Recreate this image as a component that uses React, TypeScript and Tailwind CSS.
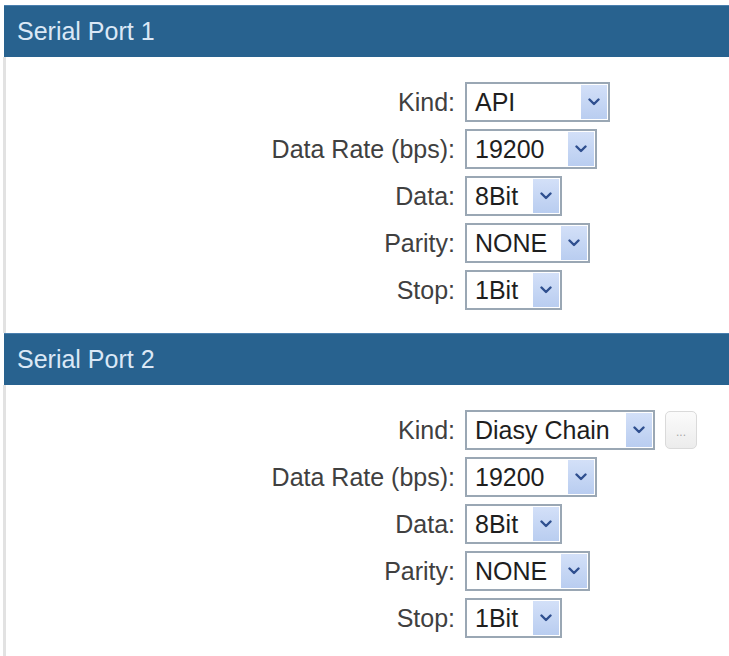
import React from "react";

const Chevron = () => (
  <svg width="12" height="8" viewBox="0 0 12 8" fill="none">
    <path d="M1.5 1.5 L6 6 L10.5 1.5" stroke="#2f4f8f" strokeWidth="2.4" strokeLinecap="round" strokeLinejoin="round" />
  </svg>
);

function Select({ value, width }: { value: string; width: string }) {
  return (
    <div className={`${width} h-[40px] flex items-stretch border-2 border-[#9aa7b4] bg-white`}>
      <div className="flex-1 flex items-center pl-[8px] text-[25px] leading-none text-[#1e1e1e] whitespace-nowrap overflow-hidden">
        {value}
      </div>
      <div className="w-[26px] my-[1px] mr-[1px] flex items-center justify-center bg-gradient-to-b from-[#d3e0f8] to-[#b9cdf0]">
        <Chevron />
      </div>
    </div>
  );
}

function Row({ label, value, width, extra }: { label: string; value: string; width: string; extra?: boolean }) {
  return (
    <div className="flex items-center h-[40px]">
      <div className="w-[449px] text-right text-[25px] leading-none text-[#404040] whitespace-nowrap">{label}</div>
      <div className="ml-[10px] flex items-center">
        <Select value={value} width={width} />
        {extra && (
          <div className="ml-[10px] w-[32px] h-[38px] rounded-[5px] border border-[#dadada] bg-gradient-to-b from-[#fbfbfb] to-[#ececec] flex items-end justify-center pb-[10px] text-[12px] leading-none text-[#a8a8a8]">
            ...
          </div>
        )}
      </div>
    </div>
  );
}

function Header({ title }: { title: string }) {
  return (
    <div className="h-[52px] ml-[1px] bg-[#28628f] border-t border-[#4a7fae] flex items-center pl-[13px] text-[25px] leading-none text-[#dbe8f6]">
      {title}
    </div>
  );
}

export default function App() {
  return (
    <div className="w-[729px] h-[656px] bg-white pt-[5px] pl-[3px] overflow-hidden" style={{ fontFamily: '"Liberation Sans", Arial, sans-serif' }}>
      <Header title="Serial Port 1" />
      <div className="border-l-[3px] border-[#e2e2e2] pt-[25px] pb-[23px] flex flex-col gap-[7px]">
        <Row label="Kind:" value="API" width="w-[145px]" />
        <Row label="Data Rate (bps):" value="19200" width="w-[132px]" />
        <Row label="Data:" value="8Bit" width="w-[97px]" />
        <Row label="Parity:" value="NONE" width="w-[125px]" />
        <Row label="Stop:" value="1Bit" width="w-[97px]" />
      </div>
      <Header title="Serial Port 2" />
      <div className="border-l-[3px] border-[#e2e2e2] pt-[25px] pb-[30px] flex flex-col gap-[7px]">
        <Row label="Kind:" value="Diasy Chain" width="w-[190px]" extra />
        <Row label="Data Rate (bps):" value="19200" width="w-[132px]" />
        <Row label="Data:" value="8Bit" width="w-[97px]" />
        <Row label="Parity:" value="NONE" width="w-[125px]" />
        <Row label="Stop:" value="1Bit" width="w-[97px]" />
      </div>
    </div>
  );
}
